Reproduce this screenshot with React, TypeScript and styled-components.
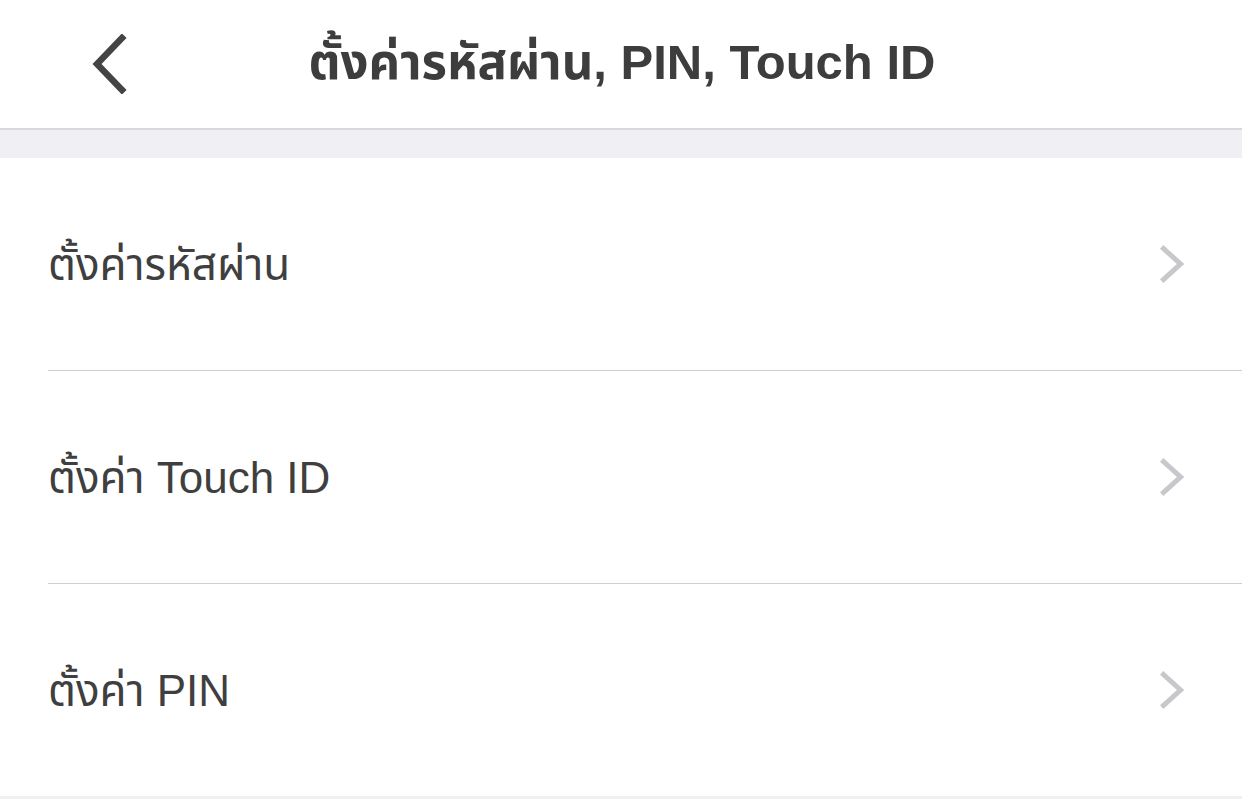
import styled, { createGlobalStyle } from 'styled-components'

const GlobalStyle = createGlobalStyle`
  html, body {
    margin: 0;
    padding: 0;
    background: #efeff4;
  }
  body {
    font-family: "Liberation Sans", "Noto Sans Thai", "Noto Sans", "DejaVu Sans", sans-serif;
  }
`

export const Screen = styled.div`
  width: 1242px;
  height: 799px;
  background: #efeff4;
  overflow: hidden;
`

export const Header = styled.header`
  height: 128px;
  background: #ffffff;
  border-bottom: 2px solid #d8d8dc;
  display: flex;
  align-items: center;
  justify-content: center;
  position: relative;
`

export const BackButton = styled.button`
  position: absolute;
  left: 79px;
  top: 34px;
  width: 60px;
  height: 60px;
  border: none;
  background: transparent;
  padding: 0;
  display: flex;
  align-items: center;
  justify-content: center;
`

export const Title = styled.h1`
  margin: 0;
  padding-left: 2px;
  font-size: 49px;
  font-weight: 700;
  color: #3d3d3d;
`

export const List = styled.div`
  margin-top: 28px;
  background: #ffffff;
`

export const Row = styled.div<{ $last?: boolean }>`
  height: 212px;
  margin-left: 48px;
  padding-right: 58px;
  display: flex;
  align-items: center;
  justify-content: space-between;
  border-bottom: ${(p) => (p.$last ? 'none' : '1px solid #cfcfd2')};
`

export const Label = styled.span`
  font-size: 44px;
  color: #3f3f3f;
  padding-top: 4px;
`

const Chevron = ({ color, width, height, stroke }: { color: string; width: number; height: number; stroke: number }) => (
  <svg width={width} height={height} viewBox={`0 0 ${width} ${height}`} fill="none">
    <path
      d={`M${stroke / 2 + 1} ${stroke / 2 + 1} L${width - stroke / 2 - 1} ${height / 2} L${stroke / 2 + 1} ${height - stroke / 2 - 1}`}
      stroke={color}
      strokeWidth={stroke}
      strokeLinecap="square"
      strokeLinejoin="miter"
    />
  </svg>
)

const BackChevron = () => (
  <svg width="36" height="60" viewBox="0 0 36 60" fill="none">
    <path d="M31 4 L6 30 L31 56" stroke="#444444" strokeWidth="6.5" strokeLinecap="square" />
  </svg>
)

const items = ['ตั้งค่ารหัสผ่าน', 'ตั้งค่า Touch ID', 'ตั้งค่า PIN']

export default function App() {
  return (
    <Screen>
      <GlobalStyle />
      <Header>
        <BackButton>
          <BackChevron />
        </BackButton>
        <Title>ตั้งค่ารหัสผ่าน, PIN, Touch ID</Title>
      </Header>
      <List>
        {items.map((label, i) => (
          <Row key={label} $last={i === items.length - 1}>
            <Label>{label}</Label>
            <Chevron color="#c7c7cc" width={24} height={38} stroke={5} />
          </Row>
        ))}
      </List>
    </Screen>
  )
}
